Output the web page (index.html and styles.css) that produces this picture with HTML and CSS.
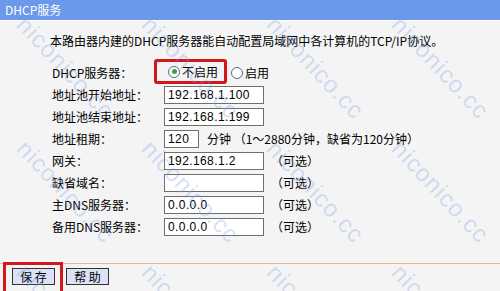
FILE: index.html
```html
<!DOCTYPE html>
<html lang="zh-CN">
<head>
    <meta charset="UTF-8">
    <title>DHCP服务</title>
    <link rel="stylesheet" href="styles.css">
</head>
<body>
<div class="page">
    <div class="title-bar">DHCP服务</div>

    <div class="content">
        <p class="intro">本路由器内建的DHCP服务器能自动配置局域网中各计算机的TCP/IP协议。</p>

        <div class="form">
            <div class="label">DHCP服务器：</div>
            <div class="field">
                <span class="mark radio-mark">
                    <label class="radio"><input type="radio" name="dhcp" checked> 不启用</label>
                </span>
                <label class="radio"><input type="radio" name="dhcp"> 启用</label>
            </div>

            <div class="label">地址池开始地址：</div>
            <div class="field"><input class="ip" type="text" value="192.168.1.100"></div>

            <div class="label">地址池结束地址：</div>
            <div class="field"><input class="ip" type="text" value="192.168.1.199"></div>

            <div class="label">地址租期：</div>
            <div class="field">
                <input class="ip short" type="text" value="120">
                <span class="hint">分钟 （1～2880分钟，缺省为120分钟）</span>
            </div>

            <div class="label">网关：</div>
            <div class="field"><input class="ip" type="text" value="192.168.1.2"><span class="opt">（可选）</span></div>

            <div class="label">缺省域名：</div>
            <div class="field"><input class="ip" type="text" value=""><span class="opt">（可选）</span></div>

            <div class="label">主DNS服务器：</div>
            <div class="field"><input class="ip" type="text" value="0.0.0.0"><span class="opt">（可选）</span></div>

            <div class="label">备用DNS服务器：</div>
            <div class="field"><input class="ip" type="text" value="0.0.0.0"><span class="opt">（可选）</span></div>
        </div>
    </div>

    <div class="footer">
        <span class="mark btn-mark"><button>保 存</button></span>
        <button>帮 助</button>
    </div>

    <!-- watermark over the page -->
    <div class="watermark">
        <span>niconico.cc</span><span>niconico.cc</span><span>niconico.cc</span><span>niconico.cc</span>
        <span>niconico.cc</span><span>niconico.cc</span><span>niconico.cc</span><span>niconico.cc</span>
        <span>niconico.cc</span><span>niconico.cc</span><span>niconico.cc</span><span>niconico.cc</span>
    </div>
</div>
</body>
</html>
```

FILE: styles.css
```css
body {
    margin: 0;
    background-color: #f4f4f4;
    font-family: "Noto Sans CJK SC", "Liberation Sans", sans-serif;
    font-size: 12px;
    line-height: 16px;
    color: #000;
}
.page {
    position: relative;
    width: 500px;
    height: 291px;
    overflow: hidden;
}
.title-bar {
    height: 20px;
    line-height: 20px;
    padding-left: 5px;
    background-color: #6b98e8;
    color: #fff;
    border-bottom: 1px solid #fff;
}
.content {
    padding: 12px 0 0 50px;
}
.intro {
    margin: 0 0 13px 0;
}
.form {
    display: grid;
    grid-template-columns: 112px auto;
    grid-auto-rows: 22px;
    margin-left: 2px;
}
.label,
.field {
    display: flex;
    align-items: center;
}
.radio {
    display: inline-flex;
    align-items: center;
    gap: 2px;
}
.radio input {
    appearance: none;
    width: 12px;
    height: 12px;
    margin: 0;
    border: 1px solid #5a6a86;
    border-radius: 50%;
    background-color: #fff;
    display: inline-flex;
    align-items: center;
    justify-content: center;
}
.radio input:checked::after {
    content: "";
    width: 5px;
    height: 5px;
    border-radius: 50%;
    background-color: #3f9c3f;
}
.mark {
    display: inline-flex;
    align-items: center;
    border: 3px solid #d3171b;
    border-radius: 3px;
}
.radio-mark {
    height: 19px;
    width: 56px;
    margin-left: -10px;
    margin-top: -3px;
    padding-left: 11px;
    margin-right: 4px;
}
.ip {
    width: 92px;
    height: 16px;
    padding: 0 3px;
    margin: 0;
    border: 1px solid #6f6f6f;
    background-color: #fff;
    font-family: "Liberation Sans", sans-serif;
    font-size: 12px;
    letter-spacing: 0.4px;
    color: #000;
}
.ip.short {
    width: 27px;
}
.hint {
    margin-left: 8px;
}
.opt {
    margin-left: 7px;
}
.footer {
    position: absolute;
    left: 0;
    right: 0;
    top: 263px;
    bottom: 0;
    border-top: 1px solid #e4b891;
    padding-left: 3px;
    display: flex;
    align-items: flex-start;
}
.btn-mark {
    margin-top: -2px;
    padding: 3px 5px 6px 6px;
    border-radius: 0;
    border-bottom: none;
}
.footer button {
    width: 43px;
    height: 17px;
    padding: 0;
    border: 1px solid #333;
    background-color: #dbe2f6;
    font-family: "Noto Sans CJK SC", sans-serif;
    font-size: 12px;
    line-height: 15px;
    color: #000;
}
.footer > button {
    margin: 4px 0 0 3px;
}
.watermark {
    position: absolute;
    inset: 0;
    padding: 12px 0 0 30px;
    display: grid;
    grid-template-columns: repeat(4, 125px);
    grid-template-rows: repeat(3, 124px);
    pointer-events: none;
}
.watermark span {
    display: block;
    width: 0;
    white-space: nowrap;
    transform-origin: 0 0;
    transform: rotate(47deg);
    font-family: "Liberation Sans", sans-serif;
    font-size: 24px;
    line-height: 24px;
    letter-spacing: 1px;
    color: rgba(110, 155, 230, 0.3);
}
```
